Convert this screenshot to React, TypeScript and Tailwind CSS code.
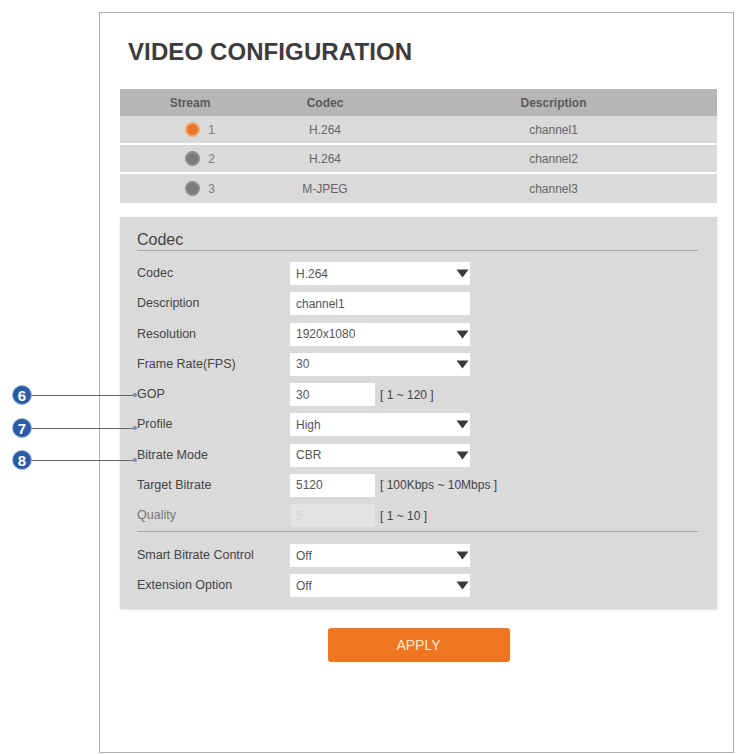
const streams = [
  { id: 1, codec: 'H.264', desc: 'channel1', active: true },
  { id: 2, codec: 'H.264', desc: 'channel2', active: false },
  { id: 3, codec: 'M-JPEG', desc: 'channel3', active: false },
]

type Field = {
  label: string
  kind: 'select' | 'text' | 'short' | 'disabled'
  value: string
  range?: string
}

const fields: Field[] = [
  { label: 'Codec', kind: 'select', value: 'H.264' },
  { label: 'Description', kind: 'text', value: 'channel1' },
  { label: 'Resolution', kind: 'select', value: '1920x1080' },
  { label: 'Frame Rate(FPS)', kind: 'select', value: '30' },
  { label: 'GOP', kind: 'short', value: '30', range: '[ 1 ~ 120 ]' },
  { label: 'Profile', kind: 'select', value: 'High' },
  { label: 'Bitrate Mode', kind: 'select', value: 'CBR' },
  { label: 'Target Bitrate', kind: 'short', value: '5120', range: '[ 100Kbps ~ 10Mbps ]' },
  { label: 'Quality', kind: 'disabled', value: '5', range: '[ 1 ~ 10 ]' },
]

const extras: Field[] = [
  { label: 'Smart Bitrate Control', kind: 'select', value: 'Off' },
  { label: 'Extension Option', kind: 'select', value: 'Off' },
]

function Arrow() {
  return (
    <svg width="13" height="9" viewBox="0 0 13 9" className="absolute right-[1px] top-[7px]">
      <path d="M0.5 0.5 H12.5 L6.5 8.5 Z" fill="#3a3a3a" />
    </svg>
  )
}

function Control({ field }: { field: Field }) {
  if (field.kind === 'select') {
    return (
      <div className="relative flex h-[23px] w-[180px] items-center bg-white pl-[6px] text-[12px] text-[#555]">
        {field.value}
        <Arrow />
      </div>
    )
  }
  if (field.kind === 'text') {
    return (
      <div className="flex h-[23px] w-[180px] items-center bg-white pl-[6px] text-[12px] text-[#555]">
        {field.value}
      </div>
    )
  }
  const disabled = field.kind === 'disabled'
  return (
    <div className="flex items-center">
      <div
        className={
          disabled
            ? 'flex h-[23px] w-[85px] items-center bg-[#e3e3e3] pl-[6px] text-[12px] text-[#d6d6d6]'
            : 'flex h-[23px] w-[85px] items-center bg-white pl-[6px] text-[12px] text-[#555]'
        }
      >
        {field.value}
      </div>
      <span className="ml-[5px] text-[12px] text-[#444]">{field.range}</span>
    </div>
  )
}

function Row({ field }: { field: Field }) {
  return (
    <div className="flex h-[23px] items-center">
      <div
        className={
          field.kind === 'disabled'
            ? 'w-[153px] text-[12.5px] text-[#777]'
            : 'w-[153px] text-[12.5px] text-[#444]'
        }
      >
        {field.label}
      </div>
      <Control field={field} />
    </div>
  )
}

function Callout({ n, top }: { n: number; top: string }) {
  return (
    <div className={`absolute left-[12px] flex items-center ${top}`}>
      <div className="flex h-[20px] w-[20px] items-center justify-center rounded-full border border-[#9fb8dc] bg-[#2a5ca6] text-[15px] font-bold leading-none text-white">
        {n}
      </div>
      <div className="h-px w-[101px] bg-[#5a6470]" />
      <div className="h-[4px] w-[4px] rounded-full bg-[#6f8fc0]" />
    </div>
  )
}

export default function App() {
  return (
    <div className="relative h-[754px] w-[737px] overflow-hidden bg-white font-['Liberation_Sans',Arial,sans-serif]">
      <div className="ml-[99px] mt-[12px] h-[741px] w-[635px] border border-[#b0b0b0] pl-[20px] pr-[16px] pt-[25px]">
        <h1 className="ml-[8px] text-[24px] font-bold leading-[28px] tracking-[0.1px] text-[#3c3c3c]">
          VIDEO CONFIGURATION
        </h1>

        {/* stream table */}
        <div className="mt-[23px] flex flex-col">
          <div className="grid h-[27px] grid-cols-[140px_130px_1fr] items-center bg-[#b6b6b6] text-[12px] font-bold text-[#5a5a5a]">
            <div className="text-center">Stream</div>
            <div className="text-center">Codec</div>
            <div className="text-center">Description</div>
          </div>
          {streams.map((s) => (
            <div
              key={s.id}
              className="grid h-[29px] grid-cols-[140px_130px_1fr] items-center border-b-2 border-white bg-[#dadada] text-[12px] text-[#666] last:border-b-0"
            >
              <div className="flex items-center justify-center gap-[8px] pl-[20px]">
                <span
                  className={
                    s.active
                      ? 'h-[15px] w-[15px] rounded-full border-2 border-[#f3a86c] bg-[#e8762a]'
                      : 'h-[15px] w-[15px] rounded-full border-2 border-[#8c8c8c] bg-[#7b7b7b]'
                  }
                />
                <span className="text-[#7a7a7a]">{s.id}</span>
              </div>
              <div className="text-center">{s.codec}</div>
              <div className="text-center">{s.desc}</div>
            </div>
          ))}
        </div>

        {/* codec panel */}
        <div className="mt-[14px] h-[392px] bg-[#dadada] pl-[17px] pr-[19px] pt-[13px] shadow-[0_1px_3px_rgba(0,0,0,0.12)]">
          <div className="border-b border-[#a8a8a8] text-[16px] leading-[20px] text-[#444]">Codec</div>
          <div className="mt-[11px] flex flex-col gap-[7.25px]">
            {fields.map((f) => (
              <Row key={f.label} field={f} />
            ))}
          </div>
          <div className="mt-[4px] border-t border-[#a8a8a8]" />
          <div className="mt-[12px] flex flex-col gap-[7px]">
            {extras.map((f) => (
              <Row key={f.label} field={f} />
            ))}
          </div>
        </div>

        <div className="mt-[19px] flex justify-center">
          <button className="h-[34px] w-[182px] rounded-[3px] bg-[#ee7621] text-[14px] text-[#fde9d6]">
            APPLY
          </button>
        </div>
      </div>

      <Callout n={6} top="top-[385px]" />
      <Callout n={7} top="top-[418px]" />
      <Callout n={8} top="top-[450px]" />
    </div>
  )
}
